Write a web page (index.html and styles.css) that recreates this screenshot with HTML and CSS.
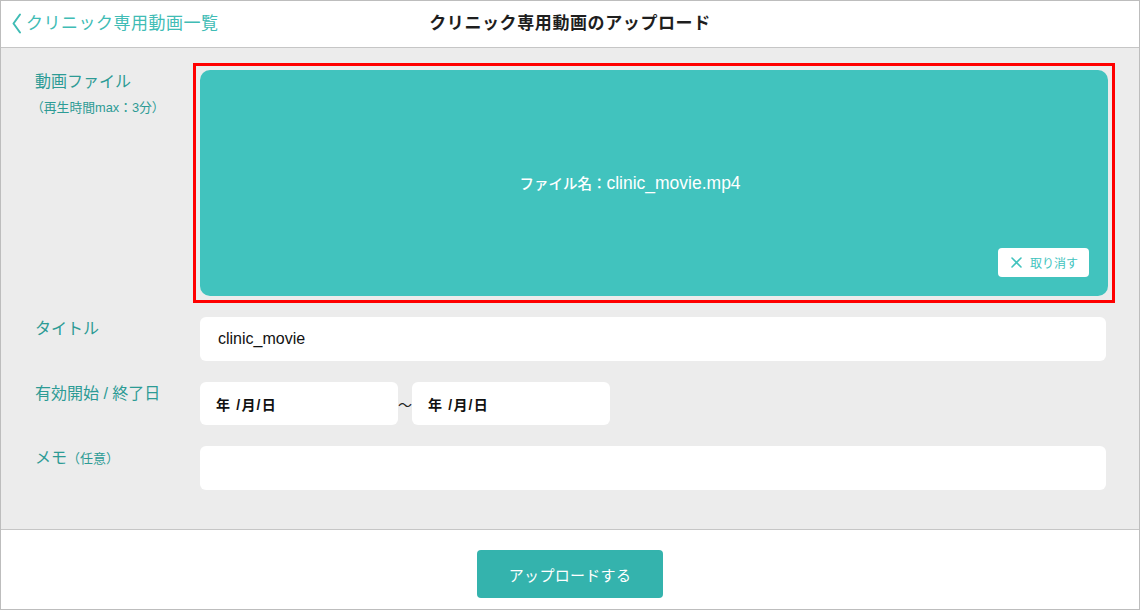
FILE: index.html
```html
<!DOCTYPE html>
<html lang="ja">
<head>
<meta charset="utf-8">
<title>クリニック専用動画のアップロード</title>
<link rel="stylesheet" href="styles.css">
</head>
<body>
<div class="page">
  <header class="header">
    <a class="back" href="#">
      <svg class="chev" width="10" height="22" viewBox="0 0 10 22"><polyline points="8,1.5 1.5,10.5 8,19.5" fill="none" stroke="#40bcb5" stroke-width="2" stroke-linecap="round" stroke-linejoin="round"/></svg>
      <span>クリニック専用動画一覧</span>
    </a>
    <h1 class="title">クリニック専用動画のアップロード</h1>
  </header>
  <main class="main">
    <div class="form">
      <div class="label">
        <div>動画ファイル</div>
        <div class="sub">（再生時間max：3分）</div>
      </div>
      <div class="drop">
        <div class="fname"><span class="jp">ファイル名：</span><span class="en">clinic_movie.mp4</span></div>
        <button class="cancel" type="button">
          <svg width="11" height="11" viewBox="0 0 11 11"><path d="M1 1L10 10M10 1L1 10" stroke="#41c3be" stroke-width="1.6" stroke-linecap="round"/></svg>
          <span>取り消す</span>
        </button>
      </div>

      <div class="label">タイトル</div>
      <div class="field"><span class="val">clinic_movie</span></div>

      <div class="label">有効開始 / 終了日</div>
      <div class="dates">
        <div class="field date"><span class="dval">年 /月/日</span></div>
        <span class="tilde">〜</span>
        <div class="field date"><span class="dval">年 /月/日</span></div>
      </div>

      <div class="label">メモ<span class="small">（任意）</span></div>
      <div class="field"></div>
    </div>
  </main>
  <footer class="footer">
    <button class="upload" type="button">アップロードする</button>
  </footer>
</div>
</body>
</html>
```
FILE: styles.css
```css
* { box-sizing: border-box; }
html, body { margin: 0; padding: 0; }
body {
  font-family: "Liberation Sans", "Noto Sans CJK JP", sans-serif;
  background: #fff;
}
.page {
  width: 1140px;
  height: 610px;
  border: 1px solid #bdbdbd;
  display: flex;
  flex-direction: column;
  overflow: hidden;
}
.header {
  height: 47px;
  flex: 0 0 47px;
  border-bottom: 1px solid #c6c6c6;
  background: #fff;
  display: flex;
  align-items: center;
  position: relative;
}
.back {
  display: flex;
  align-items: center;
  text-decoration: none;
  color: #40bcb5;
  font-size: 17px;
  letter-spacing: 0.5px;
  line-height: 22px;
  padding-left: 11px;
  gap: 4px;
}
.chev { display: block; }
.title {
  position: absolute;
  left: 0;
  right: 0;
  top: 0;
  margin: 0;
  text-align: center;
  font-size: 17px;
  font-weight: bold;
  letter-spacing: 0.6px;
  line-height: 45px;
  color: #1e1e1e;
}
.main {
  flex: 0 0 482px;
  height: 482px;
  background: #ececec;
  border-bottom: 1px solid #c6c6c6;
}
.form {
  display: grid;
  grid-template-columns: 166px 906px;
  row-gap: 21px;
  padding: 22px 0 0 33px;
}
.label {
  color: #2c9b95;
  font-size: 16px;
  line-height: 20px;
  padding-top: 2px;
  padding-left: 1px;
}
.label .sub {
  font-size: 12.8px;
  line-height: 16px;
  margin-top: 8px;
  margin-left: -4px;
}
.label .small { font-size: 13px; }
.drop {
  height: 226px;
  width: 908px;
  background: #41c3be;
  border-radius: 10px;
  position: relative;
  display: flex;
  align-items: center;
  justify-content: center;
  padding-right: 48px;
}
.drop::after {
  content: "";
  position: absolute;
  top: -7px;
  left: -7px;
  right: -7px;
  bottom: -7px;
  border: 3px solid #ff0000;
  pointer-events: none;
}
.fname {
  color: #fff;
  line-height: 20px;
}
.fname .jp { font-size: 14.5px; font-weight: 500; }
.fname .en { font-size: 17.5px; }
.cancel {
  position: absolute;
  right: 19px;
  bottom: 19px;
  width: 91px;
  height: 29px;
  border: none;
  border-radius: 4px;
  background: #fff;
  color: #41c3be;
  font-family: inherit;
  font-size: 12px;
  display: flex;
  align-items: center;
  justify-content: center;
  gap: 8px;
  padding: 0 0 0 2px;
}
.cancel svg { display: block; }
.field {
  height: 44px;
  background: #fff;
  border-radius: 6px;
  display: flex;
  align-items: center;
  padding-left: 18px;
}
.val { font-size: 16px; color: #111; }
.dates {
  display: flex;
  align-items: center;
}
.field.date {
  width: 198px;
  height: 43px;
  padding-left: 16px;
}
.dval { font-size: 14px; font-weight: 600; color: #111; letter-spacing: 1.2px; }
.tilde {
  width: 14px;
  text-align: center;
  font-size: 14px;
  color: #222;
}
.footer {
  flex: 1;
  background: #fff;
  display: flex;
  justify-content: center;
  align-items: flex-start;
  padding-top: 20px;
}
.upload {
  width: 186px;
  height: 48px;
  border: none;
  border-radius: 4px;
  background: #34b3ad;
  color: #fff;
  font-family: inherit;
  font-size: 15px;
  letter-spacing: 0.3px;
}
```
